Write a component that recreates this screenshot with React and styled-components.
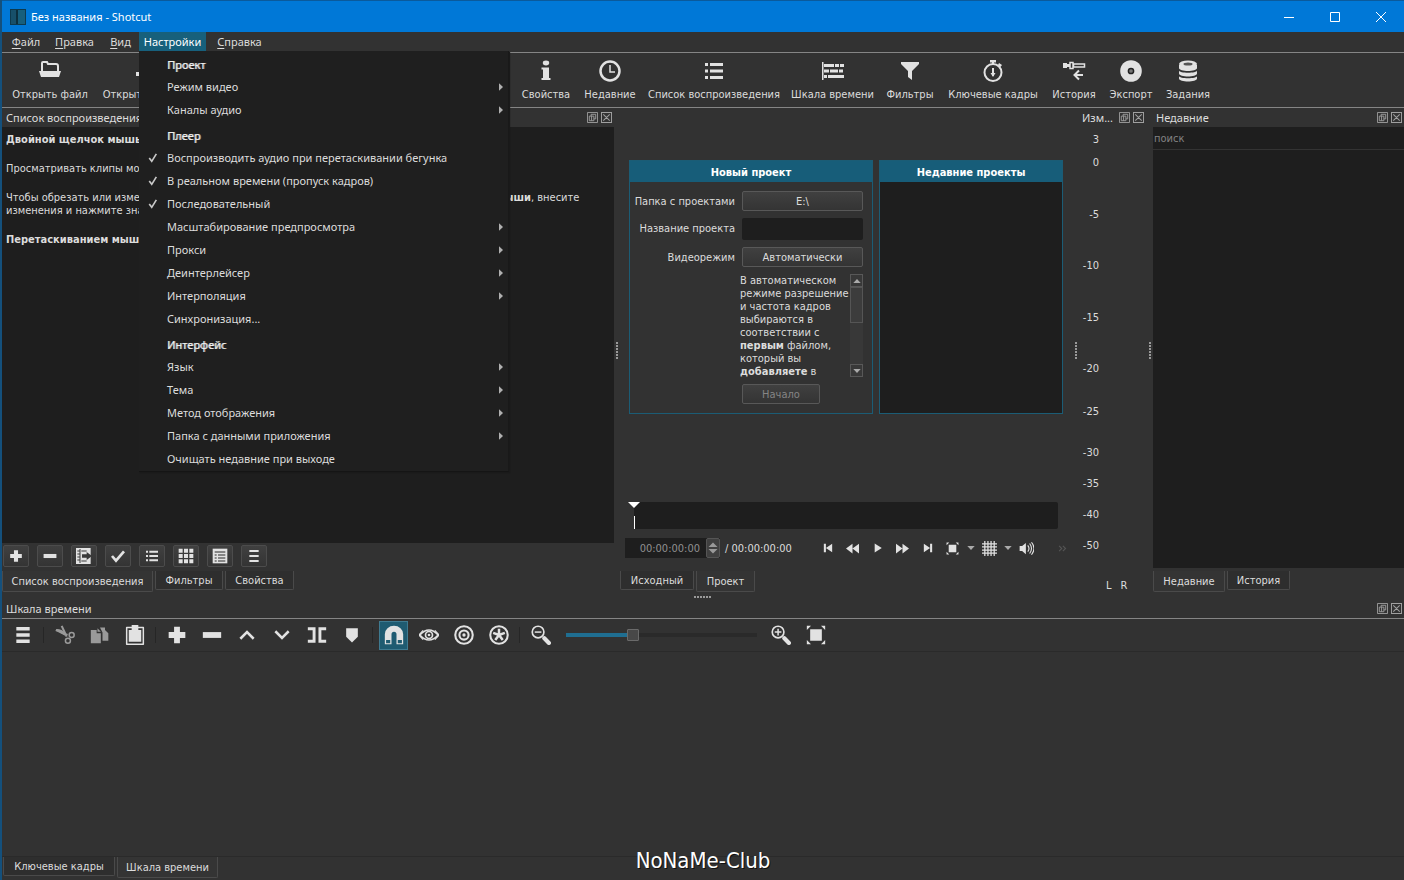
import React from "react";
import styled, { createGlobalStyle, css } from "styled-components";

const Global = createGlobalStyle`
  * { box-sizing: border-box; }
  html, body { margin: 0; height: 100%; background: #323232; }
  #root { height: 100%; }
  button, input { font: inherit; color: inherit; margin: 0; padding: 0; border: 0; background: none; }
  p { margin: 0; }
`;

const tahoma = `"DejaVu Sans Condensed", "Noto Sans", sans-serif`;
const segoe = `"Noto Sans", "Open Sans", sans-serif`;

const Window = styled.div`
  position: relative;
  display: flex;
  flex-direction: column;
  min-height: 100vh;
  border-left: 2px solid #14507c;
  background: #323232;
  color: #dcdcdc;
  font-family: ${tahoma};
  font-size: 11px;
  line-height: 13px;
`;

/* ---------- title bar and menu bar ---------- */

const TitleBar = styled.header`
  display: flex;
  align-items: center;
  height: 32px;
  padding-left: 8px;
  border-top: 1px solid #0a5a9c;
  background: #0078d7;
  color: #fff;
  font-family: ${segoe};
`;
const AppIcon = styled.span`
  width: 16px;
  height: 16px;
  margin-right: 5px;
  background: linear-gradient(90deg, #17506a 0 5px, #0c2f3e 5px 7px, #175f7c 7px);
  border: 1px solid #0d3a4e;
`;
const WindowTitle = styled.h1`
  flex: 1;
  margin: 0;
  font-size: 11px;
  font-weight: 400;
`;
const CaptionButton = styled.button`
  display: grid;
  place-items: center;
  width: 46px;
  height: 31px;
`;

const MenuBar = styled.nav`
  display: flex;
  height: 20px;
  padding-left: 3px;
  font-family: ${segoe};
`;
const MenuSlot = styled.div`
  position: relative;
`;
const MenuTitle = styled.button`
  height: 20px;
  width: ${(p) => p.$w}px;
  padding-bottom: 2px;
  text-align: center;
  white-space: nowrap;
  ${(p) => p.$open && css`background: #17607c; color: #fff;`}
  u { text-underline-offset: 2px; }
`;
const Menu = styled.div`
  position: absolute;
  z-index: 5;
  top: 19px;
  left: 0;
  width: 370px;
  background: #1f1f1f;
  border-right: 1px solid #191919;
  border-bottom: 1px solid #151515;
  box-shadow: 1px 1px 1px #1a1a1a;
`;
const MenuHeading = styled.div`
  height: 25px;
  padding-left: 28px;
  line-height: 27px;
  color: #f0f0f0;
  text-shadow: 1px 0 0 #a0a0a0;
`;
const MenuItem = styled.button`
  display: flex;
  align-items: center;
  width: 100%;
  height: 23px;
  padding: 0 3px 2px 0;
  text-align: left;
  white-space: nowrap;
  span { flex: 1; }
`;
const CheckSlot = styled.i`
  display: grid;
  place-items: center;
  width: 28px;
`;

/* ---------- main toolbar ---------- */

const Toolbar = styled.div`
  display: flex;
  height: 56px;
  padding-left: 3px;
  border: solid #858585;
  border-width: 1px 0;
`;
const ToolButton = styled.button`
  display: flex;
  flex-direction: column;
  align-items: center;
  flex: none;
  width: ${(p) => p.$w}px;
  padding-top: 6px;
  white-space: nowrap;
  svg { margin-bottom: 5px; }
`;

/* ---------- docks ---------- */

const Docks = styled.main`
  display: grid;
  flex: 486 1 0;
  grid-template-columns: 612fr 6px 453fr 6px 67fr 7px 251fr;
`;
const Dock = styled.section`
  display: flex;
  flex-direction: column;
  min-width: 0;
`;
const DockTitle = styled.header`
  display: flex;
  align-items: center;
  gap: 3px;
  height: 19px;
  padding: 0 2px 0 ${(p) => p.$pad ?? 4}px;
  font-family: ${segoe};
  h2 { flex: 1; margin: 0; font-size: 11px; font-weight: 400; white-space: nowrap; }
  button { display: grid; }
`;
const Well = styled.div`
  flex: 1;
  background: #1e1e1e;
  ${(p) => p.$text && css`
    padding: 6px 4px;
    p { margin-bottom: 16px; white-space: nowrap; }
  `}
  ${(p) => p.$gap && css`margin-bottom: 3px;`}
`;
const Splitter = styled.div`
  display: grid;
  place-items: center;
  ${(p) => p.$flat && css`height: 5px;`}
  i {
    width: ${(p) => (p.$flat ? 18 : 2)}px;
    height: ${(p) => (p.$flat ? 2 : 18)}px;
    background: repeating-linear-gradient(${(p) => (p.$flat ? "90deg" : "180deg")}, #9a9a9a 0 2px, transparent 2px 3px);
  }
`;
const ButtonRow = styled.div`
  display: flex;
  gap: 8px;
  height: 28px;
  padding: 2px 1px 0;
`;
const raised = css`
  border: 1px solid #4c4c4c;
  border-radius: 2px;
  background: linear-gradient(#404040, #343434);
`;
const SmallButton = styled.button`
  display: grid;
  place-items: center;
  width: 26px;
  height: 22px;
  ${raised}
`;
const Tabs = styled.div`
  display: flex;
  align-items: flex-start;
  gap: 2px;
  height: 23px;
  padding-left: ${(p) => p.$pad ?? 0}px;
`;
const Tab = styled.button`
  width: ${(p) => p.$w}px;
  height: ${(p) => (p.$on ? 21 : 19)}px;
  padding-top: ${(p) => (p.$on ? 1 : 0)}px;
  border: solid #4a4a4a;
  border-width: 0 1px 1px;
  border-radius: 0 0 2px 2px;
  background: ${(p) => (p.$on ? "#343434" : "#2e2e2e")};
  white-space: nowrap;
`;

/* ---------- player ---------- */

const Stage = styled.div`
  display: grid;
  flex: 1;
  grid-template-columns: 244fr 184fr;
  gap: 6px;
  align-items: start;
  padding: 52px 10px 0 9px;
`;
const Card = styled.section`
  height: 254px;
  border: 1px solid #1b5c75;
  background: ${(p) => (p.$dark ? "#1e1e1e" : "#323232")};
  h2 {
    height: 21px;
    margin: 0;
    background: #175d79;
    color: #fff;
    font-size: 11px;
    line-height: 23px;
    text-align: center;
  }
`;
const Form = styled.form`
  display: grid;
  grid-template-columns: 105px 1fr;
  grid-template-rows: 20px 22px 20px 103px 20px;
  column-gap: 7px;
  row-gap: 7px;
  padding: 9px 9px 0 0;
  label { text-align: right; line-height: 22px; white-space: nowrap; }
`;
const FormButton = styled.button`
  grid-column: 2;
  ${raised}
  border-color: #585858;
  width: ${(p) => p.$w ?? "100%"};
  &:disabled { color: #858585; }
`;
const Field = styled.input`
  width: 100%;
  border-radius: 2px;
  background: #1e1e1e;
`;
const Note = styled.div`
  grid-column: 2;
  display: flex;
  overflow: hidden;
  margin-left: -2px;
  p { flex: 1; white-space: nowrap; }
`;
const ScrollBar = styled.div`
  display: flex;
  flex-direction: column;
  flex: none;
  width: 13px;
  background: #383838;
  button { display: grid; place-items: center; height: 13px; border: 1px solid #585858; }
  i { height: 36px; border: 1px solid #555; background: #3c3c3c; }
  button:last-child { margin-top: auto; }
`;
const Scrub = styled.div`
  position: relative;
  height: 27px;
  margin: 0 15px 9px 14px;
  border-radius: 2px;
  background: #1e1e1e;
  svg { position: absolute; top: 0; left: -6px; }
`;
const Transport = styled.div`
  display: flex;
  align-items: center;
  height: 20px;
  margin: 0 0 13px 5px;
`;
const TimeBox = styled.div`
  display: flex;
  width: 95px;
  height: 20px;
  margin-right: 5px;
  background: #1e1e1e;
  color: #909090;
  input { width: 81px; padding-right: 6px; text-align: right; }
  button { display: grid; place-items: center; width: 14px; border: 1px solid #555; border-radius: 2px; background: #404040; }
`;
const Duration = styled.span`
  flex: 1;
  white-space: nowrap;
`;
const Flat = styled.button`
  display: grid;
  place-items: center;
  flex: none;
  width: ${(p) => p.$w ?? 25}px;
  height: 20px;
  ${(p) => p.$end && css`justify-items: end; padding-right: 6px;`}
`;

/* ---------- meter ---------- */

const Scale = styled.div`
  display: flex;
  flex-direction: column;
  flex: 1;
  width: 20px;
  padding-top: 6px;
  text-align: right;
`;
const Mark = styled.span`
  flex: ${(p) => p.$gap} 0 0;
`;
const Channels = styled.div`
  display: flex;
  gap: 9px;
  height: 15px;
  padding-left: 27px;
`;
const Search = styled.input`
  height: 23px;
  padding-left: 1px;
  border-bottom: 1px solid #333;
  background: #1e1e1e;
  &::placeholder { color: #828282; opacity: 1; }
`;

/* ---------- timeline ---------- */

const Timeline = styled.section`
  display: flex;
  flex-direction: column;
  flex: 281 1 0;
`;
const TimelineBar = styled.div`
  display: flex;
  align-items: center;
  height: 34px;
  padding-left: 3px;
  border-top: 1px solid #858585;
  border-bottom: 1px solid #2a2a2a;
`;
const TimelineButton = styled.button`
  display: grid;
  place-items: center;
  flex: none;
  width: 29px;
  height: 29px;
  margin: 0 3px;
  ${(p) => p.$on && css`background: #1f5b71; border: 1px solid #3f7a90;`}
`;
const Divider = styled.i`
  width: 1px;
  height: 16px;
  margin: 0 3px;
  background: #262626;
`;
const Zoom = styled.input`
  appearance: none;
  width: 191px;
  height: 13px;
  margin: 0 6px 0 8px;
  background: linear-gradient(90deg, #1f6e91 35%, #2a2a2a 35%) center / 100% 4px no-repeat;
  &::-webkit-slider-thumb {
    appearance: none;
    width: 12px;
    height: 12px;
    border: 1px solid #6a6a6a;
    border-radius: 1px;
    background: #484848;
  }
`;
const Tracks = styled.div`
  flex: 1;
  border-bottom: 1px solid #2a2a2a;
`;
const Watermark = styled.div`
  position: absolute;
  bottom: 6px;
  left: 0;
  width: 100%;
  color: #fff;
  font-family: "DejaVu Sans Condensed", sans-serif;
  font-size: 22px;
  line-height: 26px;
  text-align: center;
  text-shadow: 1px 1px 0 #111;
  pointer-events: none;
`;

/* ---------- drawings ---------- */

const glyphs = {
  open: <><path d="M4 12V4q0-1 1-1h4l1 2h8q2 0 2 2v5" fill="none" stroke="currentColor" strokeWidth="2" /><path d="M1 12h22l-2 6H3z" /></>,
  other: <><path d="M3 13h19v4H3z" /><path d="M10 4h4v10h-4z" /></>,
  save: <path d="M4 3h16v18H4z" />,
  undo: <path d="M3 12l8-7v4q9 0 9 9-3-4-9-4v5z" />,
  redo: <path d="M21 12l-8-7v4q-9 0-9 9 3-4 9-4v5z" />,
  meter: <path d="M4 6h4v14H4zM10 2h4v18h-4zM16 9h4v11h-4z" />,
  info: <><ellipse cx="12" cy="4" rx="3.200" ry="2.400" /><path d="M7.500 8.500H15V19h1.500v2h-9v-2H9v-8.500H7.500z" /></>,
  clock: <><circle cx="12" cy="12" r="9.500" fill="none" stroke="currentColor" strokeWidth="2.500" /><path d="M12 6v7h5" fill="none" stroke="currentColor" strokeWidth="1.500" /></>,
  list: <path d="M3 4h3v3H3zM8 4h13v3H8zM3 10.500h3v3H3zM8 10.500h13v3H8zM3 17h3v3H3zM8 17h13v3H8z" />,
  tracks: <path d="M1 3h1.500v18H1zM3 5h10v3H3zM14 5h4v3h-4zM19 5h4v3h-4zM3 10.500h5v3H3zM9 10.500h8v3H9zM18 10.500h4v3h-4zM3 16h3v3H3zM7 16h16v3H7z" />,
  funnel: <path d="M3 3h18v2l-7 7v9l-4-3v-6L3 5z" />,
  stopwatch: <><circle cx="12" cy="13.500" r="8.500" fill="none" stroke="currentColor" strokeWidth="2" /><path d="M9 1h6v2.500H9zM11 2h2v4h-2zM18 4l3 2-1.500 2-2.500-2zM11 9h2v8h-2zM9.500 14h5L12 18z" /></>,
  history: <><path d="M1 4h4v5H1zM5 5h3v3H5z" /><path d="M8 3.500h3v6H8zM11.500 5h11v3h-11z" fill="none" stroke="currentColor" strokeWidth="1.500" /><path d="M21 16h-8M17 11.500L12.500 16l4.500 4.500" fill="none" stroke="currentColor" strokeWidth="2" /></>,
  disc: <><circle cx="12" cy="12" r="10.800" /><circle cx="12" cy="12" r="2.600" fill="#777" stroke="#222" strokeWidth="1.500" /></>,
  jobs: <><path d="M3 6v3c0 4 18 4 18 0V6zM3 11.500v3c0 4 18 4 18 0v-3c0 3-18 3-18 0zM3 17v2.500c0 4 18 4 18 0V17c0 3-18 3-18 0z" /><ellipse cx="12" cy="5" rx="9" ry="3.500" /><ellipse cx="12" cy="5" rx="4.500" ry="1.500" fill="#555" /></>,
  plus: <path d="M8.500 2h7v6.500H22v7h-6.500V22h-7v-6.500H2v-7h6.500z" />,
  minus: <path d="M1 8.500h22v7H1z" />,
  tick: <path d="M3 12l6 7L21 5" fill="none" stroke="currentColor" strokeWidth="4" />,
  grid9: <path d="M1 1h6v6H1zM9 1h6v6H9zM17 1h6v6h-6zM1 9h6v6H1zM9 9h6v6H9zM17 9h6v6h-6zM1 17h6v6H1zM9 17h6v6H9zM17 17h6v6h-6z" />,
  burger: <path d="M4 2.500h16v4H4zM4 10h16v4H4zM4 17.500h16v4H4z" />,
  burgerSmall: <path d="M5 3h14v3H5zM5 10.500h14v3H5zM5 18h14v3H5z" />,
  update: <><path d="M0 0h22v24H0z" /><path d="M6 1.500v21M2 4.500h4M2 9h4M2 13.500h4M2 18h4M8 4.500h8M8 19.500h8" stroke="#3a3a3a" strokeWidth="1.500" /><path d="M9 9.500h7V6l8 6-8 6v-3.500H9z" fill="#3a3a3a" /></>,
  table: <><path d="M1 1h22v22H1z" /><path d="M4 6h16M4 10.500h3M9 10.500h11M4 15h3M9 15h11M4 19.500h3M9 19.500h11" stroke="#2a2a2a" strokeWidth="1.800" fill="none" /></>,
  cut: <><path d="M1 6l14 6M8 1l6 13" fill="none" stroke="currentColor" strokeWidth="2.500" /><path d="M1 5q6-1 12 5l-1 3Q7 11 1 5z" /><circle cx="20" cy="12" r="3" fill="none" stroke="currentColor" strokeWidth="1.800" /><circle cx="15.500" cy="19" r="3" fill="none" stroke="currentColor" strokeWidth="1.800" /></>,
  copy: <><path d="M1 6h7v4h5v12H1z" /><path d="M9 4l4 4H9zM12 3h6v3l4 4v9h-7V9z" /></>,
  paste: <><path d="M2 3h20v20H2z" fill="none" stroke="currentColor" strokeWidth="1.800" strokeLinejoin="round" /><path d="M8 0h8v6h3.500v14h-15V6H8z" /></>,
  up: <path d="M4 16.500L12 8.500l8 8" fill="none" stroke="currentColor" strokeWidth="3" />,
  down: <path d="M4 7.500l8 8 8-8" fill="none" stroke="currentColor" strokeWidth="3" />,
  split: <path d="M1 4.500h7.500v15H1M23 4.500h-7.500v15H23" fill="none" stroke="currentColor" strokeWidth="3.500" />,
  marker: <path d="M5 4h14v10l-7 7-7-7z" />,
  magnet: <><path d="M1 23V11a11 10 0 0 1 22 0v12h-8V11a3 3 0 0 0-6 0v12z" /><path d="M2.500 18H7.500v4H2.500zM16.500 18h5v4h-5z" fill="#1f5b71" /></>,
  eye: <><path d="M1 12q11-12 22 0-11 12-22 0z" fill="none" stroke="currentColor" strokeWidth="2" /><circle cx="12" cy="12" r="4.200" fill="none" stroke="currentColor" strokeWidth="2" /><circle cx="12" cy="12" r="1.600" /><path d="M5 6.500L0 12l5 5.500M19 6.500l5 5.500-5 5.500" fill="none" stroke="currentColor" strokeWidth="1.500" /></>,
  target: <><circle cx="12" cy="12" r="10.500" fill="none" stroke="currentColor" strokeWidth="2.500" /><circle cx="12" cy="12" r="5.500" fill="none" stroke="currentColor" strokeWidth="2.500" /><circle cx="12" cy="12" r="2" /></>,
  star: <><circle cx="12" cy="12" r="10.500" fill="none" stroke="currentColor" strokeWidth="2.500" /><path d="M12 12V4.500M12 12l7-2.500M12 12l4.500 6M12 12l-4.500 6M12 12L5 9.500" stroke="currentColor" strokeWidth="3" /></>,
  zoomOut: <><circle cx="8.500" cy="8.500" r="7" fill="none" stroke="currentColor" strokeWidth="2" /><path d="M4.500 8.500h8" stroke="currentColor" strokeWidth="1.800" /><path d="M16 16l5.500 5.500" stroke="currentColor" strokeWidth="5" strokeLinecap="round" /></>,
  zoomIn: <><circle cx="8.500" cy="8.500" r="7" fill="none" stroke="currentColor" strokeWidth="2" /><path d="M4.500 8.500h8M8.500 4.500v8" stroke="currentColor" strokeWidth="1.800" /><path d="M16 16l5.500 5.500" stroke="currentColor" strokeWidth="5" strokeLinecap="round" /></>,
  fit: <path d="M5 5h14v14H5zM1 1h5L1 6zM23 1v5l-5-5zM1 23v-5l5 5zM23 23h-5l5-5z" />,
  first: <path d="M2 2h5v20H2zM22 2v20L7 12z" />,
  last: <path d="M17 2h5v20h-5zM2 2l15 10L2 22z" />,
  rewind: <path d="M12 3v18L0 12zM24 3v18L12 12z" />,
  forward: <path d="M0 3l12 9-12 9zM12 3l12 9-12 9z" />,
  play: <path d="M4 1l17 11L4 23z" />,
  gridLines: <path d="M4.500 0v24M9.500 0v24M14.500 0v24M19.500 0v24M0 4.500h24M0 9.500h24M0 14.500h24M0 19.500h24" stroke="currentColor" strokeWidth="2" />,
  volume: <><path d="M1 8h4l6-5v18l-6-5H1z" /><path d="M14 7q4 5 0 10M17 4q6 8 0 16M20 2q8 10 0 20" fill="none" stroke="currentColor" strokeWidth="1.800" /></>,
  triDown: <path d="M1 6h22L12 18z" />,
  triUp: <path d="M1 18h22L12 6z" />,
  triRight: <path d="M6 1l12 11L6 23z" />,
  spin: <path d="M3 10h18L12 1zM3 14h18l-9 9z" />,
  check: <path d="M3 12l6 8L20 2" fill="none" stroke="currentColor" strokeWidth="4" />,
  more: <path d="M3 5l7 7-7 7M13 5l7 7-7 7" fill="none" stroke="currentColor" strokeWidth="3" />,
  float: <path d="M1 1h22v22H1zM5 9h10v10H5zM9 9V5h10v10h-4M10 9v10" fill="none" stroke="currentColor" strokeWidth="2" />,
  close: <path d="M1 1h22v22H1zM5 5l14 14M19 5L5 19" fill="none" stroke="currentColor" strokeWidth="2.200" />,
};
const Icon = ({ name, size = 20, color = "#e2e2e2" }) => (
  <svg width={size} height={size} viewBox="0 0 24 24" fill="currentColor" color={color} aria-hidden="true">{glyphs[name]}</svg>
);

const DockButtons = () => (
  <>
    <button aria-label="Открепить"><Icon name="float" size={11} color="#a0a0a0" /></button>
    <button aria-label="Закрыть"><Icon name="close" size={11} color="#a0a0a0" /></button>
  </>
);

/* ---------- content ---------- */

const settings = [
  { head: "Проект" },
  { text: "Режим видео", sub: true },
  { text: "Каналы аудио", sub: true },
  { head: "Плеер" },
  { text: "Воспроизводить аудио при перетаскивании бегунка", on: true },
  { text: "В реальном времени (пропуск кадров)", on: true },
  { text: "Последовательный", on: true },
  { text: "Масштабирование предпросмотра", sub: true },
  { text: "Прокси", sub: true },
  { text: "Деинтерлейсер", sub: true },
  { text: "Интерполяция", sub: true },
  { text: "Синхронизация..." },
  { head: "Интерфейс" },
  { text: "Язык", sub: true },
  { text: "Тема", sub: true },
  { text: "Метод отображения", sub: true },
  { text: "Папка с данными приложения", sub: true },
  { text: "Очищать недавние при выходе" },
];
const menus = [["Файл", 42], ["Правка", 55], ["Вид", 37], ["Настройки", 67], ["Справка", 67]];
const tools = [
  ["open", "Открыть файл", 90], ["other", "Открыть другое", 100], ["save", "Сохранить", 73],
  ["undo", "Отменить", 66], ["redo", "Вернуть", 61], ["meter", "Уровни звука", 119],
  ["info", "Свойства", 64], ["clock", "Недавние", 64], ["list", "Список воспроизведения", 144],
  ["tracks", "Шкала времени", 93], ["funnel", "Фильтры", 62], ["stopwatch", "Ключевые кадры", 104],
  ["history", "История", 58], ["disc", "Экспорт", 56], ["jobs", "Задания", 58],
];
const playlistTools = [["plus", "Добавить"], ["minus", "Удалить"], ["update", "Обновить"], ["tick", "Применить"], ["list", "Подробно"], ["grid9", "Значки"], ["table", "Плитка"], ["burgerSmall", "Меню"]];
const transport = [["first", "В начало"], ["rewind", "Назад"], ["play", "Воспроизвести"], ["forward", "Вперёд"], ["last", "В конец"]];
const marks = [["3", 23], ["0", 52], ["-5", 51], ["-10", 52], ["-15", 51], ["-20", 42], ["-25", 41], ["-30", 31], ["-35", 31], ["-40", 31], ["-50", 40]];
const timelineTools = [
  ["burger", "Меню"], null, ["cut", "Вырезать", "#9a9a9a"], ["copy", "Копировать", "#9a9a9a"], ["paste", "Вставить"], null,
  ["plus", "Добавить"], ["minus", "Удалить"], ["up", "Поднять"], ["down", "Перезаписать"], ["split", "Разделить"], ["marker", "Маркер"], null,
  ["magnet", "Прилипание"], ["eye", "Прокрутка"], ["target", "Сдвиг"], ["star", "Сдвиг всех дорожек"], null, ["zoomOut", "Уменьшить"],
];

const SettingsMenu = () => (
  <Menu role="menu">
    {settings.map((m) => m.head ? <MenuHeading key={m.head}>{m.head}</MenuHeading> : (
      <MenuItem key={m.text} role="menuitem">
        <CheckSlot>{m.on && <Icon name="check" size={10} color="#c8c8c8" />}</CheckSlot>
        <span>{m.text}</span>
        {m.sub && <Icon name="triRight" size={8} color="#b0b0b0" />}
      </MenuItem>
    ))}
  </Menu>
);

export default function App() {
  return (
    <>
      <Global />
      <Window>
        <TitleBar>
          <AppIcon />
          <WindowTitle>Без названия - Shotcut</WindowTitle>
          <CaptionButton aria-label="Свернуть"><svg width="10" height="10"><path d="M0 5.500h10" stroke="#fff" /></svg></CaptionButton>
          <CaptionButton aria-label="Развернуть"><svg width="10" height="10"><path d="M.5.500h9v9h-9z" stroke="#fff" fill="none" /></svg></CaptionButton>
          <CaptionButton aria-label="Закрыть"><svg width="10" height="10"><path d="M0 0l10 10M10 0L0 10" stroke="#fff" /></svg></CaptionButton>
        </TitleBar>
        <MenuBar>
          {menus.map(([name, w]) => (
            <MenuSlot key={name}>
              <MenuTitle $w={w} $open={name === "Настройки"}>
                {name === "Настройки" ? name : <><u>{name[0]}</u>{name.slice(1)}</>}
              </MenuTitle>
              {name === "Настройки" && <SettingsMenu />}
            </MenuSlot>
          ))}
        </MenuBar>
        <Toolbar>
          {tools.map(([icon, name, w]) => (
            <ToolButton key={name} $w={w}><Icon name={icon} size={24} />{name}</ToolButton>
          ))}
        </Toolbar>

        <Docks>
          <Dock>
            <DockTitle><h2>Список воспроизведения</h2><DockButtons /></DockTitle>
            <Well $text>
              <p><b>Двойной щелчок мышью по клипу откроет его в плеере.</b></p>
              <p>Просматривать клипы можно в окне «Исходный».</p>
              <p>Чтобы обрезать или изменить клип, сначала откройте его прямо здесь <b>двойным щелчком мыши</b>, внесите<br />изменения и нажмите значок обновления.</p>
              <p><b>Перетаскиванием мышью можно изменить порядок.</b></p>
            </Well>
            <ButtonRow>
              {playlistTools.map(([icon, name]) => <SmallButton key={icon} aria-label={name}><Icon name={icon} size={icon === "minus" || icon === "plus" ? 14 : 16} /></SmallButton>)}
            </ButtonRow>
            <Tabs><Tab $w={151} $on>Список воспроизведения</Tab><Tab $w={68}>Фильтры</Tab><Tab $w={69}>Свойства</Tab></Tabs>
          </Dock>
          <Splitter><i /></Splitter>
          <Dock>
            <Stage>
              <Card>
                <h2>Новый проект</h2>
                <Form onSubmit={(e) => e.preventDefault()}>
                  <label htmlFor="folder">Папка с проектами</label>
                  <FormButton id="folder" type="button">E:\</FormButton>
                  <label htmlFor="name">Название проекта</label>
                  <Field id="name" />
                  <label htmlFor="mode">Видеорежим</label>
                  <FormButton id="mode" type="button">Автоматически</FormButton>
                  <Note>
                    <p>В автоматическом<br />режиме разрешение<br />и частота кадров<br />выбираются в<br />соответствии с<br /><b>первым</b> файлом,<br />который вы<br /><b>добавляете</b> в</p>
                    <ScrollBar>
                      <button type="button" aria-label="Вверх"><Icon name="triUp" size={8} color="#aaa" /></button>
                      <i />
                      <button type="button" aria-label="Вниз"><Icon name="triDown" size={8} color="#aaa" /></button>
                    </ScrollBar>
                  </Note>
                  <FormButton $w="78px" disabled>Начало</FormButton>
                </Form>
              </Card>
              <Card $dark><h2>Недавние проекты</h2></Card>
            </Stage>
            <Scrub><svg width="12" height="27"><path d="M0 0h12L6 6z" fill="#fff" /><path d="M6.500 14v13" stroke="#fff" /></svg></Scrub>
            <Transport>
              <TimeBox>
                <input aria-label="Позиция" defaultValue="00:00:00:00" />
                <button aria-label="Изменить"><Icon name="spin" size={12} color="#999" /></button>
              </TimeBox>
              <Duration>/ 00:00:00:00</Duration>
              {transport.map(([icon, name]) => <Flat key={icon} aria-label={name}><Icon name={icon} size={icon === "rewind" || icon === "forward" ? 13 : 10} /></Flat>)}
              <Flat aria-label="Масштаб"><Icon name="fit" size={13} /></Flat>
              <Flat $w={11} aria-label="Выбор масштаба"><Icon name="triDown" size={8} color="#aaa" /></Flat>
              <Flat $w={27} aria-label="Сетка"><Icon name="gridLines" size={15} /></Flat>
              <Flat $w={10} aria-label="Выбор сетки"><Icon name="triDown" size={8} color="#aaa" /></Flat>
              <Flat $w={27} aria-label="Громкость"><Icon name="volume" size={15} /></Flat>
              <Flat $w={33} $end aria-label="Дополнительно"><Icon name="more" size={9} color="#555" /></Flat>
            </Transport>
            <Tabs><Tab $w={74}>Исходный</Tab><Tab $w={59} $on>Проект</Tab></Tabs>
          </Dock>
          <Splitter><i /></Splitter>
          <Dock>
            <DockTitle $pad={3}><h2>Изм...</h2><DockButtons /></DockTitle>
            <Scale>{marks.map(([t, gap]) => <Mark key={t} $gap={gap}>{t}</Mark>)}</Scale>
            <Channels><span>L</span><span>R</span></Channels>
          </Dock>
          <Splitter><i /></Splitter>
          <Dock>
            <DockTitle $pad={3}><h2>Недавние</h2><DockButtons /></DockTitle>
            <Search aria-label="поиск" placeholder="поиск" />
            <Well $gap />
            <Tabs><Tab $w={72} $on>Недавние</Tab><Tab $w={63}>История</Tab></Tabs>
          </Dock>
        </Docks>
        <Splitter $flat><i /></Splitter>

        <Timeline>
          <DockTitle><h2>Шкала времени</h2><DockButtons /></DockTitle>
          <TimelineBar>
            {timelineTools.map((t, i) => t
              ? <TimelineButton key={i} $on={t[0] === "magnet"} aria-label={t[1]}><Icon name={t[0]} color={t[2]} /></TimelineButton>
              : <Divider key={i} />)}
            <Zoom type="range" aria-label="Масштаб" min="0" max="100" defaultValue="34" />
            <TimelineButton aria-label="Увеличить"><Icon name="zoomIn" /></TimelineButton>
            <TimelineButton aria-label="По размеру"><Icon name="fit" /></TimelineButton>
          </TimelineBar>
          <Tracks />
          <Tabs $pad={1}><Tab $w={112}>Ключевые кадры</Tab><Tab $w={101} $on>Шкала времени</Tab></Tabs>
        </Timeline>
        <Watermark>NoNaMe-Club</Watermark>
      </Window>
    </>
  );
}
